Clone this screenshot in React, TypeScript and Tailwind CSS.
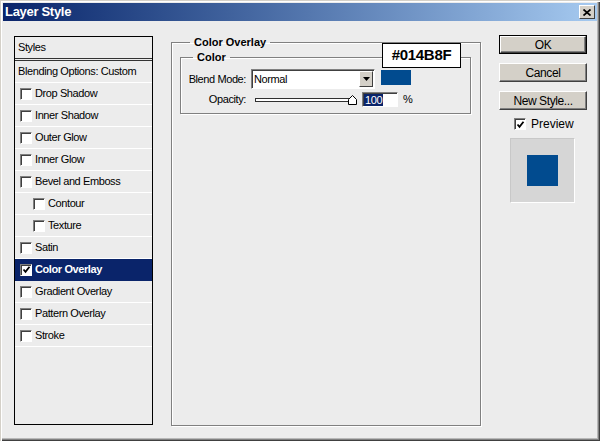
import React from 'react';

const FONT = { fontFamily: '"Liberation Sans", Arial, sans-serif' };

const CheckBox = ({ checked }: { checked?: boolean }) => (
  <span className="w-[12px] h-[12px] shrink-0 bg-white border border-t-[#808080] border-l-[#808080] border-r-white border-b-white shadow-[inset_1px_1px_0_#404040] flex items-center justify-center">
    {checked && (
      <svg width="9" height="9" viewBox="0 0 9 9">
        <path d="M1.5 4.5 L3.5 6.8 L7.5 1.8" fill="none" stroke="#000" strokeWidth="1.8" />
      </svg>
    )}
  </span>
);

const STYLES: { label: string; sub?: boolean; on?: boolean }[] = [
  { label: 'Drop Shadow' },
  { label: 'Inner Shadow' },
  { label: 'Outer Glow' },
  { label: 'Inner Glow' },
  { label: 'Bevel and Emboss' },
  { label: 'Contour', sub: true },
  { label: 'Texture', sub: true },
  { label: 'Satin' },
  { label: 'Color Overlay', on: true },
  { label: 'Gradient Overlay' },
  { label: 'Pattern Overlay' },
  { label: 'Stroke' },
];

const Button = ({ children, primary }: { children: React.ReactNode; primary?: boolean }) => (
  <div className={`h-[19px] w-[88px] ${primary ? 'border border-black' : ''}`}>
    <div className="h-full w-full bg-[#d4d0c8] border border-t-white border-l-white border-r-[#404040] border-b-[#404040] shadow-[inset_-1px_-1px_0_#808080] flex items-center justify-center text-[12px] leading-none text-black">
      {children}
    </div>
  </div>
);

export default function App() {
  return (
    <div
      className="w-[600px] h-[441px] bg-[#ececec] p-[3px] flex flex-col shadow-[inset_1px_1px_0_#d4d0c8,inset_2px_2px_0_#ffffff,inset_-1px_-1px_0_#404040,inset_-2px_-2px_0_#808080,inset_-3px_-3px_0_#b8b8b8] text-[11px] text-black tracking-[-0.4px]"
      style={FONT}
    >
      {/* title bar */}
      <div className="h-[18px] bg-linear-to-r from-[#0a246a] to-[#a6caf0] flex items-center justify-between pl-[2px] pr-[2px]">
        <span className="text-white font-bold text-[13px] tracking-[-0.3px]">Layer Style</span>
        <div className="w-[16px] h-[14px] bg-[#d4d0c8] border border-t-white border-l-white border-r-[#404040] border-b-[#404040] flex items-center justify-center">
          <svg width="8" height="7" viewBox="0 0 8 7">
            <path d="M0.5 0.5 L7.5 6.5 M7.5 0.5 L0.5 6.5" stroke="#000" strokeWidth="1.7" />
          </svg>
        </div>
      </div>

      {/* body */}
      <div className="flex flex-1 pt-[15px] pl-[11px]">
        {/* style list */}
        <div className="w-[139px] h-[389px] border border-black flex flex-col">
          <div className="h-[24px] border-b-[3px] border-double border-[#333] flex items-center pl-[3px]">Styles</div>
          <div className="h-[22px] border-b border-white flex items-center pl-[3px]">Blending Options: Custom</div>
          {STYLES.map((s) => (
            <div
              key={s.label}
              className={`h-[22px] border-b flex items-center gap-[3px] ${s.sub ? 'pl-[18px]' : 'pl-[5px]'} ${
                s.on ? 'bg-[#0a246a] border-transparent text-white font-bold' : 'border-white'
              }`}
            >
              <CheckBox checked={s.on} />
              <span>{s.label}</span>
            </div>
          ))}
        </div>

        {/* options */}
        <div className="relative ml-[18px]">
          <fieldset className="w-[310px] h-[390px] border border-[#808080] shadow-[inset_1px_1px_0_#ffffff,1px_1px_0_#ffffff] px-[8px]">
            <legend className="ml-[10px] px-[4px] font-bold leading-[13px] tracking-normal">Color Overlay</legend>
            <fieldset className="mt-[2px] w-[291px] h-[63px] border border-[#808080] shadow-[inset_1px_1px_0_#ffffff,1px_1px_0_#ffffff]">
              <legend className="ml-[12px] px-[4px] font-bold leading-[13px] tracking-normal">Color</legend>
              <div className="flex items-start mt-[5px]">
                <div className="w-[65px] text-right leading-[20px]">Blend Mode:</div>
                <div className="ml-[5px] w-[124px] h-[20px] bg-white border border-t-[#808080] border-l-[#808080] border-r-white border-b-white shadow-[inset_1px_1px_0_#404040] flex items-center justify-between pl-[2px] pr-[1px]">
                  <span className="text-[11px]">Normal</span>
                  <div className="w-[14px] h-[16px] bg-[#d4d0c8] border border-t-white border-l-white border-r-[#404040] border-b-[#404040] flex items-center justify-center">
                    <svg width="7" height="4" viewBox="0 0 7 4">
                      <path d="M0 0 H7 L3.5 4 Z" fill="#000" />
                    </svg>
                  </div>
                </div>
                <div className="ml-[6px] mt-[1px] w-[30px] h-[15px] bg-[#014b8f]" />
              </div>
              <div className="flex items-center mt-[3px] h-[15px]">
                <div className="w-[65px] text-right">Opacity:</div>
                <div className="relative ml-[9px] w-[102px] h-[15px] flex items-center">
                  <div className="w-[96px] h-[4px] border border-[#303030] bg-white" />
                  <svg className="absolute left-[93px] top-[3px]" width="9" height="10" viewBox="0 0 9 10">
                    <path d="M0.5 4.5 L4.5 0.5 L8.5 4.5 V9.5 H0.5 Z" fill="#fff" stroke="#000" strokeWidth="1" />
                  </svg>
                </div>
                <div className="ml-[5px] w-[36px] h-[15px] bg-white border border-t-[#808080] border-l-[#808080] border-r-white border-b-white shadow-[inset_1px_1px_0_#404040] flex items-center pl-[1px]">
                  <span className="bg-[#0a246a] text-white leading-[12px] px-[1px]">100</span>
                </div>
                <span className="ml-[5px]">%</span>
              </div>
            </fieldset>
          </fieldset>
          <div className="absolute left-[211px] top-[7px] w-[79px] h-[25px] bg-white border border-black flex items-center justify-center font-bold text-[15px] tracking-[-0.3px]">
            #014B8F
          </div>
        </div>

        {/* buttons */}
        <div className="ml-[18px] -mt-[1px] flex flex-col">
          <Button primary>OK</Button>
          <div className="mt-[9px]">
            <Button>Cancel</Button>
          </div>
          <div className="mt-[9px]">
            <Button>New Style...</Button>
          </div>
          <div className="mt-[8px] ml-[15px] h-[12px] flex items-center gap-[5px] text-[12px] leading-[12px] tracking-normal">
            <CheckBox checked />
            <span>Preview</span>
          </div>
          <div className="mt-[8px] ml-[11px] w-[65px] h-[65px] bg-[#d6d6d6] border border-t-[#c8c8c8] border-l-[#c8c8c8] border-r-white border-b-white flex items-center justify-center">
            <div className="w-[31px] h-[31px] bg-[#014b8f]" />
          </div>
        </div>
      </div>
    </div>
  );
}
